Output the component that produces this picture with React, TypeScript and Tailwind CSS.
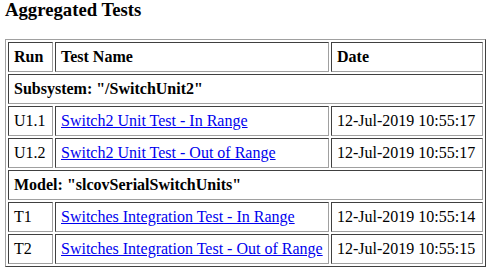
type Row =
  | { kind: "group"; label: string }
  | { kind: "test"; run: string; name: string; date: string };

const rows: Row[] = [
  { kind: "group", label: 'Subsystem: "/SwitchUnit2"' },
  { kind: "test", run: "U1.1", name: "Switch2 Unit Test - In Range", date: "12-Jul-2019 10:55:17" },
  { kind: "test", run: "U1.2", name: "Switch2 Unit Test - Out of Range", date: "12-Jul-2019 10:55:17" },
  { kind: "group", label: 'Model: "slcovSerialSwitchUnits"' },
  { kind: "test", run: "T1", name: "Switches Integration Test - In Range", date: "12-Jul-2019 10:55:14" },
  { kind: "test", run: "T2", name: "Switches Integration Test - Out of Range", date: "12-Jul-2019 10:55:15" },
];

const cell =
  "border border-t-[#404040] border-l-[#404040] border-b-[#a0a0a0] border-r-[#a0a0a0] px-[5px] py-[5px] h-[30px] leading-[18px] text-left align-middle font-['Liberation_Serif','Times_New_Roman',serif]";

export default function App() {
  return (
    <div className="min-h-screen bg-white pl-[5px] text-black font-['Liberation_Serif','Times_New_Roman',serif]">
      <h3 className="text-[18.72px] font-bold leading-[19px] mb-[20px] font-['Liberation_Serif','Times_New_Roman',serif]">
        Aggregated Tests
      </h3>
      <table className="w-[481px] border-separate border-spacing-[2px] border border-t-[#a0a0a0] border-l-[#a0a0a0] border-b-[#404040] border-r-[#404040] text-[16px]">
        <thead>
          <tr>
            <th className={`${cell} w-[45px] font-bold`}>Run</th>
            <th className={`${cell} font-bold`}>Test Name</th>
            <th className={`${cell} w-[152px] font-bold`}>Date</th>
          </tr>
        </thead>
        <tbody>
          {rows.map((r, i) =>
            r.kind === "group" ? (
              <tr key={i}>
                <td colSpan={3} className={`${cell} font-bold`}>
                  {r.label}
                </td>
              </tr>
            ) : (
              <tr key={i}>
                <td className={cell}>{r.run}</td>
                <td className={cell}>
                  <a href="#" className="text-[#0000ee] underline">
                    {r.name}
                  </a>
                </td>
                <td className={cell}>{r.date}</td>
              </tr>
            )
          )}
        </tbody>
      </table>
    </div>
  );
}
